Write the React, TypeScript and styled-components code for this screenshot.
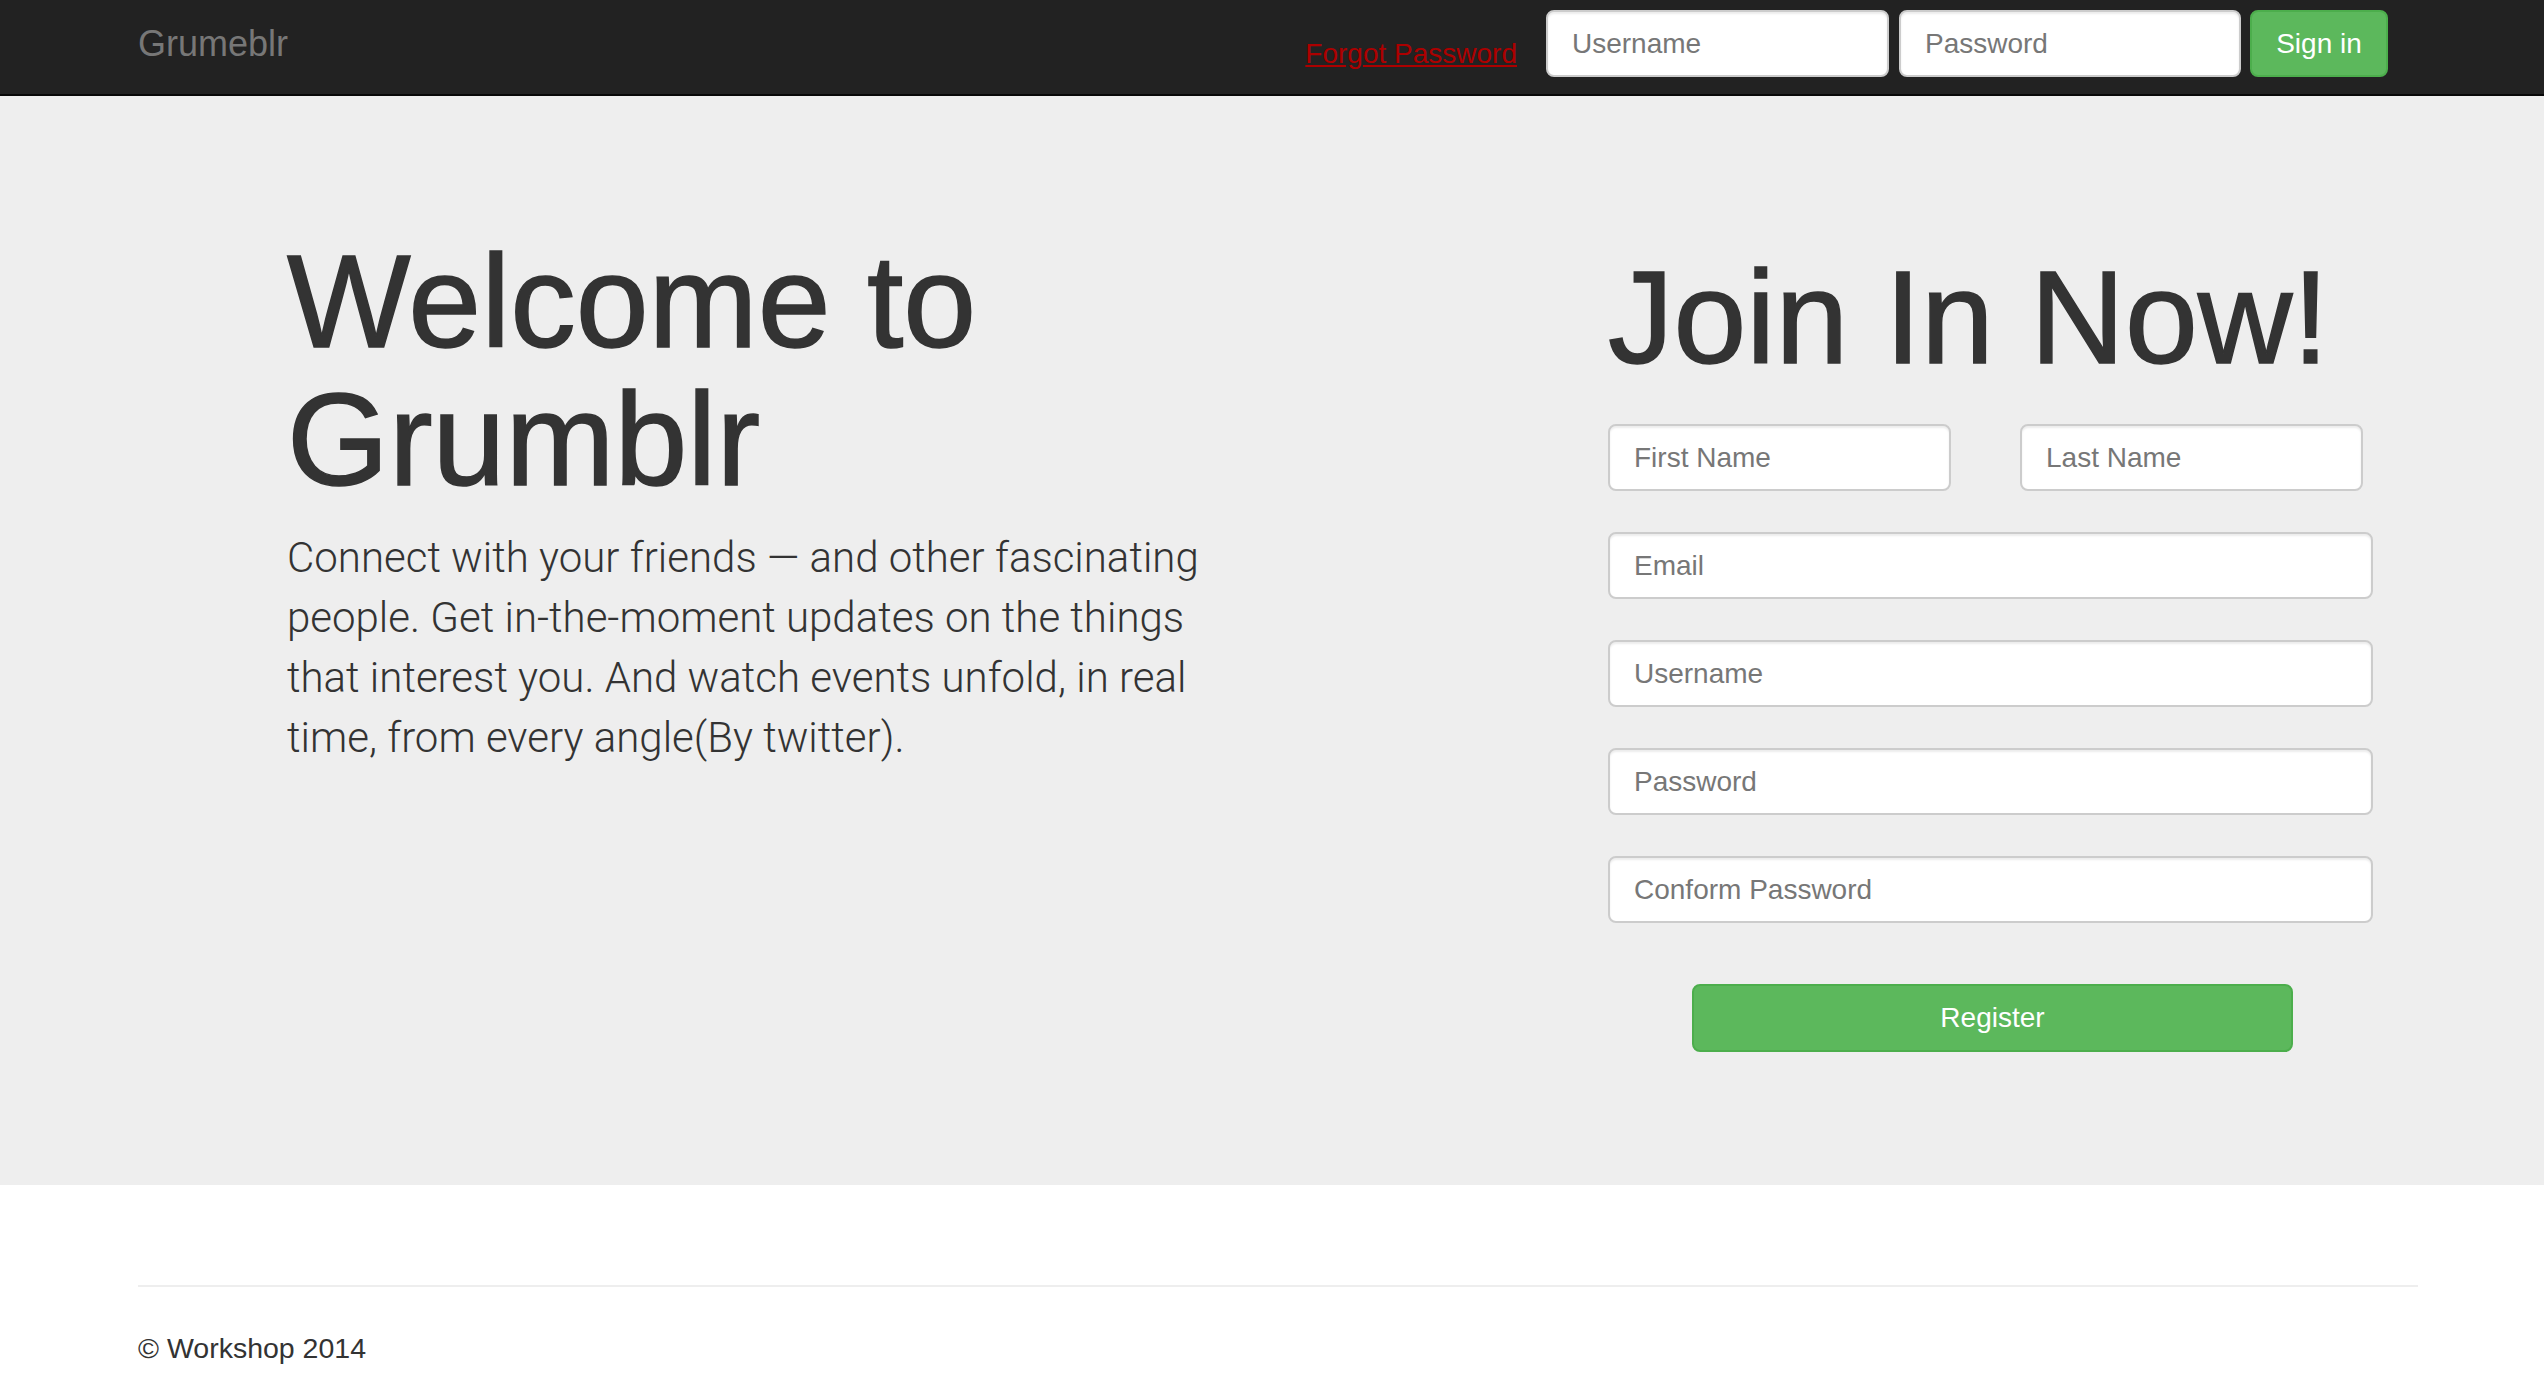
import React from "react";
import styled, { createGlobalStyle } from "styled-components";

const GlobalStyle = createGlobalStyle`
  html, body {
    margin: 0;
    padding: 0;
    background: #fff;
  }
  body {
    font-family: "Liberation Sans", Arial, sans-serif;
    color: #333;
  }
  *, *::before, *::after {
    box-sizing: border-box;
  }
  input::placeholder {
    color: #777;
    opacity: 1;
  }
`;

const Navbar = styled.nav`
  height: 96px;
  background: #222;
  border-bottom: 2px solid #080808;
`;

const NavInner = styled.div`
  width: 2280px;
  height: 100%;
  margin-left: 138px;
  padding-right: 30px;
  display: flex;
  align-items: flex-start;
  justify-content: space-between;
`;

const Brand = styled.a`
  margin-top: 24px;
  font-size: 36px;
  line-height: 40px;
  color: #777;
  text-decoration: none;
`;

const NavForm = styled.form`
  display: flex;
  align-items: flex-start;
`;

const ForgotLink = styled.a`
  margin-top: 34px;
  margin-right: 29px;
  font-size: 28px;
  line-height: 40px;
  color: #ad0000;
  text-decoration: underline;
`;

const TextInput = styled.input<{ $w?: number; $gap?: number; $top?: number }>`
  display: block;
  width: ${(p) => (p.$w ? `${p.$w}px` : "100%")};
  height: 67px;
  margin: ${(p) => p.$top ?? 0}px ${(p) => p.$gap ?? 0}px 0 0;
  padding: 0 24px;
  font-family: "Liberation Sans", Arial, sans-serif;
  font-size: 28px;
  color: #555;
  background: #fff;
  border: 2px solid #ccc;
  border-radius: 8px;
  box-shadow: inset 0 2px 2px rgba(0, 0, 0, 0.075);
  outline: none;
`;

const SuccessButton = styled.button<{ $w?: number; $h: number; $top?: number }>`
  display: block;
  width: ${(p) => (p.$w ? `${p.$w}px` : "auto")};
  height: ${(p) => p.$h}px;
  margin-top: ${(p) => p.$top ?? 0}px;
  padding: 0;
  font-family: "Liberation Sans", Arial, sans-serif;
  font-size: 28px;
  white-space: nowrap;
  color: #fff;
  background: #5cb85c;
  border: 2px solid #4cae4c;
  border-radius: 8px;
  cursor: pointer;
`;

const Jumbotron = styled.section`
  background: #eee;
  padding: 137px 0 133px;
`;

const JumboInner = styled.div`
  width: 2280px;
  margin-left: 138px;
  display: grid;
  grid-template-columns: 1470px 765px;
`;

const IntroCol = styled.div`
  padding-left: 149px;
`;

const Headline = styled.h1<{ $top?: number; $bottom?: number }>`
  margin: ${(p) => p.$top ?? 0}px 0 ${(p) => p.$bottom ?? 0}px;
  font-size: 131px;
  line-height: 138px;
  font-weight: normal;
  color: #333;
  -webkit-text-stroke: 1.5px #333;
  white-space: nowrap;
`;

const Lead = styled.p`
  margin: 19px 0 0;
  font-family: Roboto, "Liberation Sans", Arial, sans-serif;
  font-weight: 300;
  font-size: 42px;
  line-height: 60px;
  color: #333;
  white-space: nowrap;
`;

const SignupCol = styled.div`
  display: flex;
  flex-direction: column;
`;

const SignupForm = styled.form`
  display: flex;
  flex-direction: column;
  gap: 41px;
`;

const NameRow = styled.div`
  display: grid;
  grid-template-columns: 343px 343px;
  column-gap: 69px;
`;

const RegisterWrap = styled.div`
  display: flex;
  justify-content: center;
  padding-left: 4px;
`;

const Footer = styled.footer`
  width: 2280px;
  margin-left: 138px;
  padding: 100px 0 20px;
`;

const Rule = styled.hr`
  margin: 0;
  border: 0;
  border-top: 2px solid #eee;
`;

const Copyright = styled.p`
  margin: 41px 0 0;
  font-size: 28.5px;
  line-height: 40px;
  color: #333;
`;

export default function App() {
  return (
    <>
      <GlobalStyle />
      <Navbar>
        <NavInner>
          <Brand href="#">Grumeblr</Brand>
          <NavForm onSubmit={(e) => e.preventDefault()}>
            <ForgotLink href="#">Forgot Password</ForgotLink>
            <TextInput $w={343} $gap={10} $top={10} placeholder="Username" />
            <TextInput $w={342} $gap={9} $top={10} type="password" placeholder="Password" />
            <SuccessButton $h={67} $w={138} $top={10} type="submit">
              Sign in
            </SuccessButton>
          </NavForm>
        </NavInner>
      </Navbar>

      <Jumbotron>
        <JumboInner>
          <IntroCol>
            <Headline>
              Welcome to
              <br />
              Grumblr
            </Headline>
            <Lead>
              Connect with your friends — and other fascinating
              <br />
              people. Get in-the-moment updates on the things
              <br />
              that interest you. And watch events unfold, in real
              <br />
              time, from every angle(By twitter).
            </Lead>
          </IntroCol>
          <SignupCol>
            <Headline $top={16} $bottom={37}>
              Join In Now!
            </Headline>
            <SignupForm onSubmit={(e) => e.preventDefault()}>
              <NameRow>
                <TextInput placeholder="First Name" />
                <TextInput placeholder="Last Name" />
              </NameRow>
              <TextInput type="email" placeholder="Email" />
              <TextInput placeholder="Username" />
              <TextInput type="password" placeholder="Password" />
              <TextInput type="password" placeholder="Conform Password" />
            </SignupForm>
            <RegisterWrap>
              <SuccessButton $w={601} $h={68} $top={61} type="submit">
                Register
              </SuccessButton>
            </RegisterWrap>
          </SignupCol>
        </JumboInner>
      </Jumbotron>

      <Footer>
        <Rule />
        <Copyright>© Workshop 2014</Copyright>
      </Footer>
    </>
  );
}
